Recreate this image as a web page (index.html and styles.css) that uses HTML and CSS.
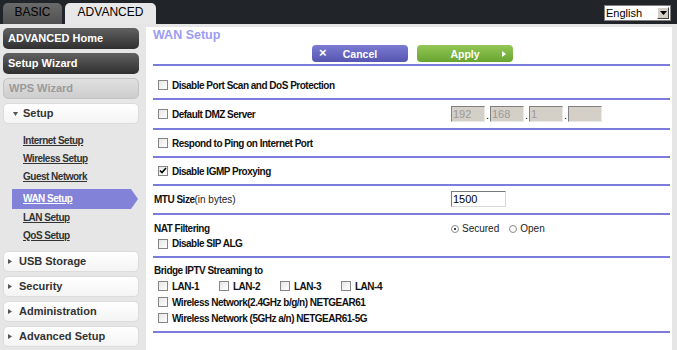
FILE: index.html
```html
<!DOCTYPE html>
<html lang="en">
<head>
    <meta charset="UTF-8">
    <title>WAN Setup</title>
    <link rel="stylesheet" href="styles.css">
</head>
<body>
    <div class="topbar">
        <div class="tabs">
            <div class="tab tab-basic">BASIC</div>
            <div class="tab tab-adv">ADVANCED</div>
        </div>
        <div class="lang">
            <span class="lang-text">English</span>
            <span class="lang-btn"><svg width="7" height="4" viewBox="0 0 7 4"><path d="M0 0h7L3.5 4z" fill="#000"/></svg></span>
        </div>
    </div>
    <div class="layout">
        <div class="sidebar">
            <div class="side-btn dark">ADVANCED Home</div>
            <div class="side-btn dark">Setup Wizard</div>
            <div class="side-btn off">WPS Wizard</div>
            <div class="group open"><svg class="tri" width="5" height="4" viewBox="0 0 5 4"><path d="M0 0h5L2.5 4z" fill="#555"/></svg>Setup</div>
            <div class="links">
                <a class="link">Internet Setup</a>
                <a class="link">Wireless Setup</a>
                <a class="link">Guest Network</a>
                <a class="link active">WAN Setup</a>
                <a class="link">LAN Setup</a>
                <a class="link">QoS Setup</a>
            </div>
            <div class="group"><svg class="tri" width="4" height="5" viewBox="0 0 4 5"><path d="M0 0v5L4 2.5z" fill="#555"/></svg>USB Storage</div>
            <div class="group"><svg class="tri" width="4" height="5" viewBox="0 0 4 5"><path d="M0 0v5L4 2.5z" fill="#555"/></svg>Security</div>
            <div class="group"><svg class="tri" width="4" height="5" viewBox="0 0 4 5"><path d="M0 0v5L4 2.5z" fill="#555"/></svg>Administration</div>
            <div class="group"><svg class="tri" width="4" height="5" viewBox="0 0 4 5"><path d="M0 0v5L4 2.5z" fill="#555"/></svg>Advanced Setup</div>
        </div>

        <div class="main">
            <div class="title">WAN Setup</div>
            <div class="actions">
                <div class="btn cancel"><span class="btn-ico">&times;</span><span class="btn-label">Cancel</span></div>
                <div class="btn apply"><span class="btn-label">Apply</span><svg class="btn-arrow" width="4" height="6" viewBox="0 0 4 6"><path d="M0 0v6L4 3z" fill="#fff"/></svg></div>
            </div>

            <div class="sec s1">
                <div class="row"><span class="cb"></span><span class="lbl">Disable Port Scan and DoS Protection</span></div>
            </div>
            <div class="sec s2">
                <div class="row">
                    <span class="cb"></span><span class="lbl grow">Default DMZ Server</span>
                    <div class="right">
                        <span class="ip">192</span><span class="dot">.</span><span class="ip">168</span><span class="dot">.</span><span class="ip">1</span><span class="dot">.</span><span class="ip"></span>
                    </div>
                </div>
            </div>
            <div class="sec s3">
                <div class="row"><span class="cb"></span><span class="lbl">Respond to Ping on Internet Port</span></div>
            </div>
            <div class="sec s3">
                <div class="row"><span class="cb"><svg width="8" height="8" viewBox="0 0 8 8"><path d="M1 3.5l2 2 4-4.5" stroke="#000" stroke-width="1.6" fill="none"/></svg></span><span class="lbl">Disable IGMP Proxying</span></div>
            </div>
            <div class="sec s5">
                <div class="row">
                    <span class="lbl head grow">MTU Size<span class="thin">(in bytes)</span></span>
                    <div class="right"><span class="field">1500</span></div>
                </div>
            </div>
            <div class="sec s6">
                <div class="row r15">
                    <span class="lbl head grow">NAT Filtering</span>
                    <div class="right radios">
                        <span class="radio on"></span><span class="thin">Secured</span>
                        <span class="radio"></span><span class="thin">Open</span>
                    </div>
                </div>
                <div class="row r15"><span class="cb"></span><span class="lbl">Disable SIP ALG</span></div>
            </div>
            <div class="sec s7">
                <div class="row"><span class="lbl head">Bridge IPTV Streaming to</span></div>
                <div class="row">
                    <span class="lan"><span class="cb"></span><span class="lbl">LAN-1</span></span>
                    <span class="lan"><span class="cb"></span><span class="lbl">LAN-2</span></span>
                    <span class="lan"><span class="cb"></span><span class="lbl">LAN-3</span></span>
                    <span class="lan"><span class="cb"></span><span class="lbl">LAN-4</span></span>
                </div>
                <div class="row"><span class="cb"></span><span class="lbl">Wireless Network(2.4GHz b/g/n) NETGEAR61</span></div>
                <div class="row"><span class="cb"></span><span class="lbl">Wireless Network (5GHz a/n) NETGEAR61-5G</span></div>
            </div>
        </div>
    </div>
</body>
</html>
```

FILE: styles.css
```css
body {
    margin: 0;
    height: 350px;
    overflow: hidden;
    background: #e6e6e6;
    font-family: "Liberation Sans", Arial, sans-serif;
    color: #000;
}
.topbar {
    height: 24px;
    background: #212529;
    display: flex;
    justify-content: space-between;
    align-items: flex-end;
}
.tabs {
    display: flex;
    gap: 3px;
    padding-left: 3px;
}
.tab {
    height: 21px;
    line-height: 19px;
    font-size: 12px;
    text-align: center;
    color: #000;
    border-radius: 5px 5px 0 0;
}
.tab-basic {
    width: 59px;
    background: linear-gradient(#6a6a6a, #505050);
}
.tab-adv {
    width: 91px;
    background: #e8e8e8;
}
.lang {
    align-self: flex-start;
    margin: 5px 6px 0 0;
    width: 67px;
    height: 16px;
    box-sizing: border-box;
    background: #fff;
    border: 1px solid #808080;
    display: flex;
    font-size: 11px;
    line-height: 14px;
}
.lang-text {
    flex: 1;
    padding-left: 1px;
}
.lang-btn {
    width: 12px;
    margin: 1px;
    background: #d4d0c8;
    border: 1px solid;
    border-color: #fff #404040 #404040 #fff;
    box-sizing: border-box;
    display: flex;
    align-items: center;
    justify-content: center;
}

.layout {
    display: flex;
    height: 326px;
}
.sidebar {
    width: 143px;
    padding: 4px 0 0 3px;
}
.side-btn {
    width: 136px;
    height: 21px;
    box-sizing: border-box;
    border-radius: 5px;
    margin-bottom: 4px;
    padding-left: 5px;
    font-size: 11px;
    font-weight: bold;
    line-height: 21px;
}
.side-btn.dark {
    background: linear-gradient(#616161, #2f2f2f);
    color: #fff;
}
.side-btn.off {
    background: linear-gradient(#e0e0e0, #cdcdcd);
    border: 1px solid #c4c4c4;
    line-height: 19px;
    color: #9a9a9a;
}
.group {
    width: 136px;
    height: 21px;
    box-sizing: border-box;
    border: 1px solid #dcdcdc;
    border-radius: 5px;
    background: linear-gradient(#fff, #f4f4f4);
    font-size: 11px;
    font-weight: bold;
    color: #333;
    line-height: 19px;
    padding-left: 3px;
    margin-bottom: 4px;
    display: flex;
    align-items: center;
}
.group .tri {
    margin: 0 7px 0 1px;
}
.group.open {
    margin-bottom: 0;
}
.group.open .tri {
    margin: 0 5px 0 6px;
}
.links {
    display: flex;
    flex-direction: column;
    padding: 8px 0 6px;
}
.link {
    height: 18px;
    line-height: 18px;
    padding-left: 20px;
    font-size: 10px;
    letter-spacing: -0.5px;
    font-weight: bold;
    color: #333;
    text-decoration: underline;
}
.link.active {
    margin: 3px 0 0 9px;
    width: 126px;
    height: 20px;
    line-height: 20px;
    padding-left: 11px;
    box-sizing: border-box;
    background: #8282d8;
    color: #fff;
    clip-path: polygon(0 0, calc(100% - 7px) 0, 100% 50%, calc(100% - 7px) 100%, 0 100%);
}

.main {
    flex: 1;
    margin: 3px 5px 0 0;
    background: #fff;
    padding: 0 2px 0 7px;
}
.title {
    height: 16px;
    line-height: 16px;
    font-size: 12.5px;
    font-weight: bold;
    color: #9c9cf4;
}
.actions {
    display: flex;
    gap: 9px;
    margin: 2px 0 2px 159px;
}
.btn {
    width: 96px;
    height: 17px;
    border-radius: 4px;
    display: flex;
    align-items: center;
    color: #fff;
    font-size: 10.5px;
    font-weight: bold;
    position: relative;
}
.cancel {
    background: linear-gradient(#7b7bd2, #5656b2);
}
.apply {
    background: linear-gradient(#93c656, #69a530);
}
.btn-label {
    flex: 1;
    text-align: center;
}
.btn-ico {
    position: absolute;
    left: 7px;
    top: 1px;
    font-size: 13px;
    line-height: 14px;
}
.btn-arrow {
    position: absolute;
    right: 7px;
    top: 6px;
}

.sec {
    border-top: 2px solid #7c7cdc;
}
.s1 { padding: 11px 0 5px; }
.s2 { padding: 6px 0 6px; }
.s3 { padding: 5px 0 5px; }
.s5 { padding: 5px 0 6px; }
.s6 { padding: 6px 0 5px; }
.s7 {
    padding: 4px 0 5px;
    border-bottom: 2px solid #7c7cdc;
}
.row {
    height: 16px;
    display: flex;
    align-items: center;
}
.row.r15 {
    height: 15px;
}
.lbl {
    font-size: 10px;
    letter-spacing: -0.5px;
    font-weight: bold;
    color: #111;
}
.lbl.head {
    margin-left: 1px;
}
.grow {
    flex: 1;
}
.thin {
    font-weight: normal;
    font-size: 10px;
    letter-spacing: 0;
    color: #222;
}
.cb {
    width: 10px;
    height: 10px;
    box-sizing: border-box;
    border: 1px solid #858585;
    background: linear-gradient(135deg, #e6e6e6, #fff);
    margin: 0 4px 0 5px;
    display: flex;
    align-items: center;
    justify-content: center;
    flex: none;
}
.right {
    width: 219px;
    display: flex;
    align-items: center;
}
.ip {
    width: 34px;
    height: 16px;
    box-sizing: border-box;
    background: #d4d0c8;
    border: 1px solid;
    border-color: #808080 #e8e8e8 #e8e8e8 #808080;
    font-size: 11px;
    line-height: 14px;
    color: #9a9a9a;
    padding-left: 1px;
}
.dot {
    width: 5px;
    text-align: center;
    font-size: 11px;
    line-height: 14px;
    align-self: flex-end;
}
.field {
    width: 55px;
    height: 16px;
    box-sizing: border-box;
    border: 1px solid;
    border-color: #7a7a7a #d8d8d8 #d8d8d8 #7a7a7a;
    font-size: 11px;
    line-height: 14px;
    padding-left: 1px;
}
.radios {
    padding-left: 5px;
}
.radio {
    width: 8px;
    height: 8px;
    box-sizing: border-box;
    border: 1px solid #8a8a8a;
    border-radius: 50%;
    background: #fff;
    margin-right: 3px;
    position: relative;
}
.radio.on::after {
    content: "";
    position: absolute;
    left: 2px;
    top: 2px;
    width: 2px;
    height: 2px;
    border-radius: 50%;
    background: #000;
}
.radios .thin + .radio {
    margin-left: 10px;
}
.lan {
    width: 61px;
    display: flex;
    align-items: center;
}
```
